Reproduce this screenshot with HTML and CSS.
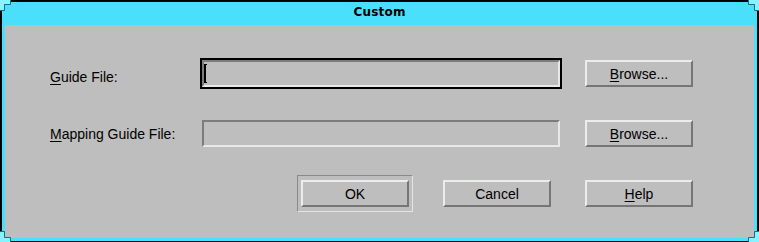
FILE: index.html
```html
<!DOCTYPE html>
<html>
<head>
<meta charset="utf-8">
<title>Custom</title>
<link rel="stylesheet" href="styles.css">
</head>
<body>
<div class="window">
  <div class="titlebar">Custom</div>
  <div class="content">
    <div class="form">
      <label class="label label-first"><u>G</u>uide File:</label>
      <div class="field focused"><span class="caret"></span></div>
      <button class="btn"><u>B</u>rowse...</button>

      <label class="label label-second"><u>M</u>apping Guide File:</label>
      <div class="field"></div>
      <button class="btn"><u>B</u>rowse...</button>

      <div class="actions">
        <button class="btn default">OK</button>
        <button class="btn">Cancel</button>
        <button class="btn"><u>H</u>elp</button>
      </div>
    </div>
  </div>
  <svg class="corner tl" width="11" height="11" viewBox="0 0 11 11"><path d="M0 0H10V4H4V10H0Z" fill="#8af2ff"/><path d="M10.5 0V4.5H4.5V10.5H0" fill="none" stroke="#1b6f7d" stroke-width="1"/></svg>
  <svg class="corner tr" width="11" height="11" viewBox="0 0 11 11"><path d="M0 0H10V4H4V10H0Z" fill="#8af2ff"/><path d="M10.5 0V4.5H4.5V10.5H0" fill="none" stroke="#1b6f7d" stroke-width="1"/></svg>
  <svg class="corner bl" width="11" height="11" viewBox="0 0 11 11"><path d="M0 0H10V4H4V10H0Z" fill="#8af2ff"/><path d="M10.5 0V4.5H4.5V10.5H0" fill="none" stroke="#1b6f7d" stroke-width="1"/></svg>
  <svg class="corner br" width="11" height="11" viewBox="0 0 11 11"><path d="M0 0H10V4H4V10H0Z" fill="#8af2ff"/><path d="M10.5 0V4.5H4.5V10.5H0" fill="none" stroke="#1b6f7d" stroke-width="1"/></svg>
</div>
</body>
</html>
```

FILE: styles.css
```css
* { box-sizing: border-box; }

html, body {
  margin: 0;
  padding: 0;
  background: #bebebe;
}

.window {
  position: relative;
  width: 759px;
  height: 242px;
  display: flex;
  flex-direction: column;
  background: #4ae0fb;
  border-top: 2px solid #000;
  border-left: 2px solid #000;
  border-right: 2px solid #000;
  border-bottom: 1px solid #000;
  padding: 0 3px 3px 3px;
}

.titlebar {
  height: 23px;
  padding-top: 3px;
  line-height: 14px;
  text-align: center;
  font-family: "DejaVu Sans", sans-serif;
  font-weight: bold;
  font-size: 12px;
  color: #000;
  letter-spacing: 0.2px;
}

.content {
  flex: 1;
  background: #bebebe;
  padding: 35px 0 0 45px;
  font-family: "Liberation Sans", Arial, sans-serif;
  font-size: 14px;
  color: #000;
}

.form {
  display: grid;
  grid-template-columns: 127px 358px 108px;
  grid-auto-rows: 27px;
  column-gap: 25px;
  row-gap: 33px;
}

.label {
  white-space: nowrap;
  line-height: 16px;
  align-self: start;
}

.label-first { padding-top: 9px; }
.label-second { padding-top: 6px; }

u {
  text-decoration: underline;
  text-underline-offset: 2px;
}

.field {
  position: relative;
  background: #bebebe;
  border: 2px solid;
  border-color: #7c7c7c #e8e8e8 #e8e8e8 #7c7c7c;
  padding: 0 0 0 0;
  display: flex;
  align-items: center;
}

.field.focused {
  outline: 2px solid #000;
}

.caret {
  width: 3px;
  height: 19px;
  margin-left: 0;
  border-left: 2px solid #000;
  border-top: 1px solid #000;
  border-bottom: 1px solid #000;
}

.btn {
  position: relative;
  width: 108px;
  height: 27px;
  padding: 0;
  margin: 0;
  background: #bebebe;
  border: 2px solid;
  border-color: #ececec #767676 #767676 #ececec;
  font-family: "Liberation Sans", Arial, sans-serif;
  font-size: 14px;
  color: #000;
  display: flex;
  align-items: center;
  justify-content: center;
  line-height: 16px;
}

.btn.default::before {
  content: "";
  position: absolute;
  top: -7px;
  left: -6px;
  right: -6px;
  bottom: -7px;
  border: 1px solid;
  border-color: #8a8a8a #e4e4e4 #e4e4e4 #8a8a8a;
}

.actions {
  grid-column: 1 / -1;
  display: flex;
  justify-content: flex-end;
  gap: 34px;
}

.corner {
  position: absolute;
  display: block;
}

.corner.tl { top: -2px; left: -2px; }
.corner.tr { top: -2px; right: -2px; transform: scaleX(-1); }
.corner.bl { bottom: -1px; left: -2px; transform: scaleY(-1); }
.corner.br { bottom: -1px; right: -2px; transform: scale(-1, -1); }
```
